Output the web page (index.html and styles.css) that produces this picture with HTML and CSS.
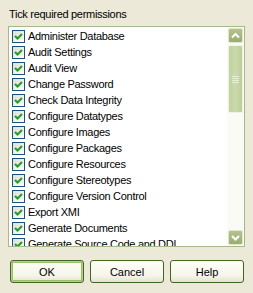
FILE: index.html
```html
<!DOCTYPE html>
<html>
<head>
  <link rel="stylesheet" href="styles.css">
</head>
<body>
  <div class="dialog">
    <div class="caption">Tick required permissions</div>

    <div class="listbox">
      <ul class="items">
        <li><span class="check"><svg width="13" height="13" viewBox="0 0 13 13"><polyline points="3,6 5.5,8.5 10,4" /></svg></span>Administer Database</li>
        <li><span class="check"><svg width="13" height="13" viewBox="0 0 13 13"><polyline points="3,6 5.5,8.5 10,4" /></svg></span>Audit Settings</li>
        <li><span class="check"><svg width="13" height="13" viewBox="0 0 13 13"><polyline points="3,6 5.5,8.5 10,4" /></svg></span>Audit View</li>
        <li><span class="check"><svg width="13" height="13" viewBox="0 0 13 13"><polyline points="3,6 5.5,8.5 10,4" /></svg></span>Change Password</li>
        <li><span class="check"><svg width="13" height="13" viewBox="0 0 13 13"><polyline points="3,6 5.5,8.5 10,4" /></svg></span>Check Data Integrity</li>
        <li><span class="check"><svg width="13" height="13" viewBox="0 0 13 13"><polyline points="3,6 5.5,8.5 10,4" /></svg></span>Configure Datatypes</li>
        <li><span class="check"><svg width="13" height="13" viewBox="0 0 13 13"><polyline points="3,6 5.5,8.5 10,4" /></svg></span>Configure Images</li>
        <li><span class="check"><svg width="13" height="13" viewBox="0 0 13 13"><polyline points="3,6 5.5,8.5 10,4" /></svg></span>Configure Packages</li>
        <li><span class="check"><svg width="13" height="13" viewBox="0 0 13 13"><polyline points="3,6 5.5,8.5 10,4" /></svg></span>Configure Resources</li>
        <li><span class="check"><svg width="13" height="13" viewBox="0 0 13 13"><polyline points="3,6 5.5,8.5 10,4" /></svg></span>Configure Stereotypes</li>
        <li><span class="check"><svg width="13" height="13" viewBox="0 0 13 13"><polyline points="3,6 5.5,8.5 10,4" /></svg></span>Configure Version Control</li>
        <li><span class="check"><svg width="13" height="13" viewBox="0 0 13 13"><polyline points="3,6 5.5,8.5 10,4" /></svg></span>Export XMI</li>
        <li><span class="check"><svg width="13" height="13" viewBox="0 0 13 13"><polyline points="3,6 5.5,8.5 10,4" /></svg></span>Generate Documents</li>
        <li><span class="check"><svg width="13" height="13" viewBox="0 0 13 13"><polyline points="3,6 5.5,8.5 10,4" /></svg></span>Generate Source Code and DDL</li>
      </ul>

      <div class="scrollbar">
        <div class="sb-btn"><svg width="13" height="13" viewBox="0 0 13 13"><polyline points="3,8.5 6.5,5 10,8.5" /></svg></div>
        <div class="sb-track">
          <div class="sb-thumb"><span class="grip"></span></div>
        </div>
        <div class="sb-btn"><svg width="13" height="13" viewBox="0 0 13 13"><polyline points="3,5 6.5,8.5 10,5" /></svg></div>
      </div>
    </div>

    <div class="buttons">
      <button class="btn default">OK</button>
      <button class="btn">Cancel</button>
      <button class="btn">Help</button>
    </div>
  </div>
</body>
</html>
```

FILE: styles.css
```css
* {
  box-sizing: border-box;
  margin: 0;
  padding: 0;
}
body {
  background-color: #ece9d8;
  font-family: "Liberation Sans", Arial, sans-serif;
  font-size: 11px;
  letter-spacing: -0.3px;
  color: #000;
}
.dialog {
  padding: 8px 8px 0 8px;
}
.caption {
  padding-left: 1px;
  height: 18px;
  line-height: 13px;
}

/* list box */
.listbox {
  display: flex;
  height: 221px;
  background-color: #fff;
  border: 1px solid #a5b98c;
  overflow: hidden;
}
.items {
  flex: 1;
  list-style: none;
  padding-top: 1px;
  overflow: hidden;
}
.items li {
  display: flex;
  align-items: center;
  height: 16px;
  padding-left: 3px;
  white-space: nowrap;
}
.check {
  width: 13px;
  height: 13px;
  margin-right: 3px;
  border: 1px solid #1c5180;
  background: linear-gradient(135deg, #dcdcd7 0%, #f3f3f0 60%, #ffffff 100%);
  display: flex;
}
.check svg {
  margin: -1px;
}
.check polyline {
  fill: none;
  stroke: #21a121;
  stroke-width: 2.2;
}

/* scroll bar */
.scrollbar {
  width: 17px;
  display: flex;
  flex-direction: column;
  background-color: #fbfbf6;
  padding: 1px;
}
.sb-btn {
  height: 15px;
  border: 1px solid #dfe6cc;
  border-radius: 2px;
  background: linear-gradient(to bottom, #b2c38c, #9aae70);
  display: flex;
  align-items: center;
  justify-content: center;
}
.sb-btn svg {
  width: 13px;
  height: 13px;
}
.sb-btn polyline {
  fill: none;
  stroke: #fff;
  stroke-width: 2;
}
.sb-track {
  flex: 1;
  padding-top: 2px;
}
.sb-thumb {
  height: 68px;
  border: 1px solid #eef3e2;
  border-radius: 2px;
  background: linear-gradient(to right, #c0d29c, #cbdaaf 50%, #bccd96);
  display: flex;
  align-items: center;
  justify-content: center;
}
.grip {
  width: 7px;
  height: 7px;
  background: repeating-linear-gradient(to bottom, #e8efd9 0 1px, transparent 1px 2px);
}

/* buttons */
.buttons {
  display: flex;
  gap: 6px;
  margin-top: 13px;
  padding-left: 2px;
}
.btn {
  width: 74px;
  height: 23px;
  font-family: "Liberation Sans", Arial, sans-serif;
  font-size: 11px;
  color: #000;
  border: 1px solid #3f6720;
  border-radius: 3px;
  background: linear-gradient(to bottom, #fffff8 0%, #f6f5ea 70%, #e3e1cf 100%);
}
.btn.default {
  box-shadow: inset 0 0 0 1px #b8cd8e, inset 0 0 0 2px #9fbb6c;
}
```
